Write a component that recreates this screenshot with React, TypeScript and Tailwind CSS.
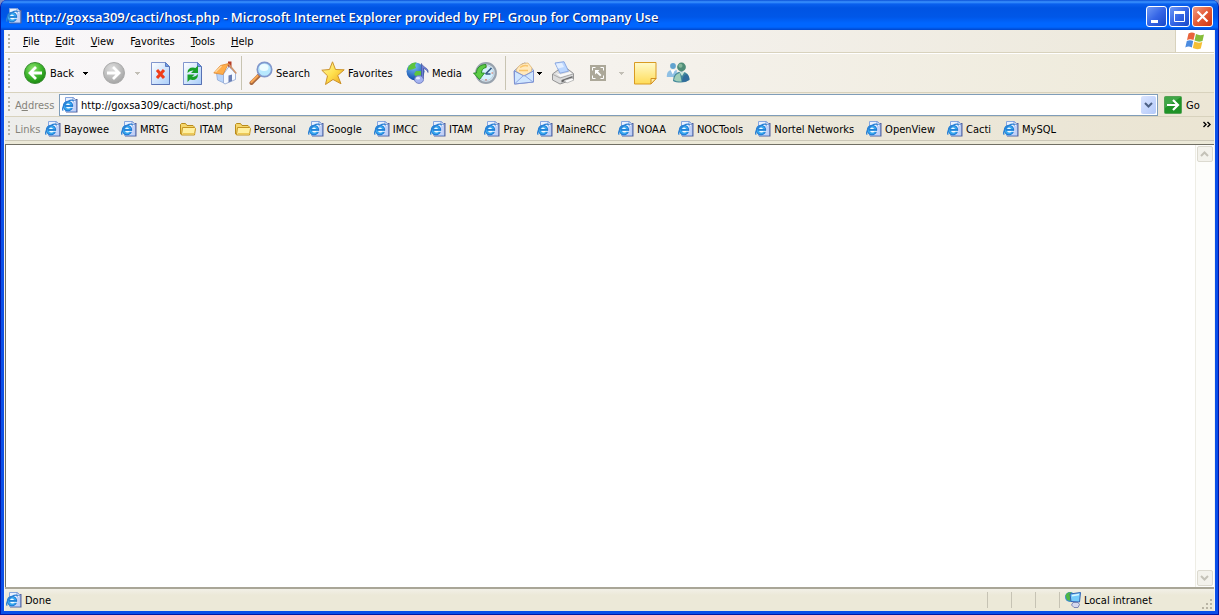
import React from "react";

type Box = { className?: string };

function PageIcon({ className = "h-4 w-4" }: Box) {
  return (
    <svg viewBox="0 0 16 16" className={className} aria-hidden="true">
      <path d="M4 2h11.500v13.500H4z" fill="#56639c" />
      <path d="M3.500.5h8L14 3v11.500H3.500z" fill="#eaf1ff" stroke="#86a6df" />
      <path d="M11 5h2.500v9H9z" fill="#c3d1f8" />
      <path d="M11 .5V3.500h3z" fill="#fff" stroke="#6f90d0" strokeWidth=".8" />
      <circle cx="6" cy="9" r="5.200" fill="#1f7ad2" />
      <circle cx="6" cy="9" r="4.300" fill="#38a8f0" />
      <path d="M4 7.900Q4.400 6.400 6 6.400t2 1.500z" fill="#f2faff" />
      <path d="M4 9.800h7.400v.9H8.200Q7.400 11.700 6 11.600 4.300 11.500 4 9.800z" fill="#f2faff" />
      <path d="M3 8.900h8" stroke="#1f7ad2" strokeWidth="1.500" />
      <path d="M1.200 13.600C-.6 11.500 2.500 5.500 8 3.400c2.200-.7 3.600-.4 3 1.200" fill="none" stroke="#2a80d4" strokeWidth="1.300" />
    </svg>
  );
}

function FolderIcon() {
  return (
    <svg viewBox="0 0 16 16" className="h-4 w-4" aria-hidden="true">
      <path d="M.5 13V3.500l1-1h4l1.500 2h6l1 1V13z" fill="#f5d66b" stroke="#b98c1c" />
      <path d="M2.500 6.500h12.200l.8 1-1 6.500H1.500z" fill="#fff0a0" stroke="#c6951f" />
      <path d="M3 12.500h11.500" stroke="#edc956" />
    </svg>
  );
}

function Arrow({ muted = false }: { muted?: boolean }) {
  return (
    <svg viewBox="0 0 5 3" className={muted ? "h-[3px] w-[5px] fill-[#c2bfb6]" : "h-[3px] w-[5px] fill-black"} shapeRendering="crispEdges" aria-hidden="true">
      <path d="M0 0h5L2.500 3z" />
    </svg>
  );
}

function RoundArrow({ back = false }: { back?: boolean }) {
  const id = back ? "backFill" : "forwardFill";
  return (
    <svg viewBox="0 0 22 22" className="h-[22px] w-[22px] shrink-0" aria-hidden="true">
      <defs>
        <radialGradient id={id} cx=".4" cy=".3" r=".75">
          <stop offset="0" stopColor={back ? "#8ee36f" : "#dedede"} />
          <stop offset=".55" stopColor={back ? "#3db52c" : "#bebebe"} />
          <stop offset="1" stopColor={back ? "#16840d" : "#a2a2a2"} />
        </radialGradient>
      </defs>
      <circle cx="11" cy="11" r="10.500" fill={`url(#${id})`} stroke={back ? "#3a8c33" : "#aaa"} />
      <path d={back ? "M18 11H6m6-6-6 6 6 6" : "M4 11h12m-6-6 6 6-6 6"} fill="none" stroke="#fff" strokeWidth="2.800" />
    </svg>
  );
}

function Sheet({ children }: { children: React.ReactNode }) {
  return (
    <svg viewBox="0 0 20 23" className="h-[23px] w-5" aria-hidden="true">
      <defs>
        <linearGradient id="sheetFill" x2="1" y2="1">
          <stop stopColor="#fff" />
          <stop offset="1" stopColor="#a9cdf9" />
        </linearGradient>
      </defs>
      <path d="M.5.5h14l4 4v18H.5z" fill="url(#sheetFill)" stroke="#8196ce" />
      <path d="M.5 22.500h18V5" fill="none" stroke="#5771b4" />
      <path d="M14.500.5v4h4z" fill="#6f9ae8" stroke="#5c7dc0" />
      {children}
    </svg>
  );
}

function HomeIcon() {
  return (
    <svg viewBox="0 0 24 24" className="h-6 w-6" aria-hidden="true">
      <path d="M15 .5h3.500V8H15z" fill="#b63e26" />
      <path d="M3.500 12 10 10l2 12.500L4.500 19z" fill="#b9d4fa" stroke="#8fa8d6" strokeWidth=".8" />
      <path d="M10.500 13 16 5.500l6.500 7v6L12 23l-1.500-1z" fill="#f6f9ff" stroke="#8ea5d0" strokeWidth=".8" />
      <path d="M15.500 14.500l3.500-1v6.500l-3.500 1.500z" fill="#6a7fb5" />
      <path d="M.8 12 7.500 4.500 15.500 2.500 10 13.500z" fill="#ffae4c" stroke="#e08a34" strokeWidth=".8" />
      <path d="M15.500 3 23.300 12.500" stroke="#d09468" strokeWidth="1.600" />
      <path d="M2.500 11 8.500 5" stroke="#ffd9a3" strokeWidth="1.200" />
    </svg>
  );
}

function SearchIcon() {
  return (
    <svg viewBox="0 0 24 24" className="h-6 w-6 shrink-0" aria-hidden="true">
      <path d="M2.500 22 10 14.500" stroke="#a8683f" strokeWidth="4" strokeLinecap="round" />
      <path d="M2.500 21 8.500 15" stroke="#f8a654" strokeWidth="2.200" strokeLinecap="round" />
      <circle cx="15.500" cy="8.500" r="7.200" fill="#b7e8fe" stroke="#8197cc" strokeWidth="1.700" />
      <ellipse cx="15" cy="6.500" rx="4.500" ry="3.500" fill="#eefcff" />
    </svg>
  );
}

function StarIcon() {
  return (
    <svg viewBox="0 0 24 24" className="h-6 w-6 shrink-0" aria-hidden="true">
      <defs>
        <linearGradient id="starFill" x2="1" y2="1">
          <stop stopColor="#fffbb0" />
          <stop offset=".5" stopColor="#ffe04d" />
          <stop offset="1" stopColor="#eda019" />
        </linearGradient>
      </defs>
      <path d="M11.500.8l3 7.700 8.700.3-6.500 5.700 3.300 8.300-8-4.300-7.500 5 2-8.700L.8 9.200l7.700-.7z" fill="url(#starFill)" stroke="#cc922a" strokeLinejoin="round" />
    </svg>
  );
}

function MediaIcon() {
  return (
    <svg viewBox="0 0 24 24" className="h-6 w-6 shrink-0" aria-hidden="true">
      <defs>
        <radialGradient id="globeFill" cx=".4" cy=".2" r=".8">
          <stop stopColor="#7cc4fa" />
          <stop offset="1" stopColor="#0d47a8" />
        </radialGradient>
      </defs>
      <circle cx="9.500" cy="10.500" r="9" fill="url(#globeFill)" />
      <path d="M3 5c2-3 5-4 7.500-3.500L9 4l1 3-4 1.500L2 9c0-2 0-3 1-4zM10 10l5 0v6l-4 1-3-4z" fill="#5cc43f" />
      <path d="M15.500 18V2.500c1 4 7.500 4 6.500 9-1-2.500-2.500-3.500-4.500-4V18" fill="#6f7fd6" stroke="#4b589f" strokeWidth=".7" />
      <ellipse cx="13" cy="18.500" rx="4.500" ry="3.900" fill="#a6b4f1" stroke="#6170b9" strokeWidth=".8" />
      <ellipse cx="12" cy="17.300" rx="2" ry="1.200" fill="#e4e9ff" />
    </svg>
  );
}

function HistoryIcon() {
  return (
    <svg viewBox="0 0 24 24" className="h-6 w-6" aria-hidden="true">
      <circle cx="13" cy="12" r="9.800" fill="#dcebf5" stroke="#98a2ad" strokeWidth="2.200" />
      <circle cx="13" cy="12" r="7.600" fill="#d6f0fd" stroke="#b9cddb" />
      <path d="M12.500 13 18.500 7m-6 6h5" stroke="#365c85" strokeWidth="1.700" />
      <path d="M13 5v1.500m7 5.500h-1.500M13 19.500V18" stroke="#d9604a" strokeWidth="1.200" />
      <path d="M13 3.500C7 3.500 3.500 7 3.500 12H.5l6 6.500 5-6.500H8.500c0-3 1.500-5 4.500-5.500z" fill="#5ecb45" stroke="#238a22" strokeWidth=".9" />
    </svg>
  );
}

function MailIcon() {
  return (
    <svg viewBox="0 0 22 24" className="h-6 w-[22px] shrink-0" aria-hidden="true">
      <path d="M1 10 9 3q3-2 5 0l6.500 6v12L1.500 23z" fill="#b7d5fb" stroke="#8496d2" />
      <path d="M3 9q4-7.500 12-7l4 5-1 4-7 4-7-4z" fill="#ffe9bd" stroke="#e0b570" strokeWidth=".8" />
      <path d="M7 6.500q4-3 8-1.500M6 9.500h9" stroke="#f9c46a" strokeWidth="1.500" fill="none" />
      <path d="M1.500 10 11 15l9.500-5V21l-19 2z" fill="#cfe6ff" stroke="#7f93d2" />
      <path d="M2 22.500 11 14l9 7" stroke="#8fa6e2" fill="none" />
    </svg>
  );
}

function PrintIcon() {
  return (
    <svg viewBox="0 0 24 24" className="h-6 w-6" aria-hidden="true">
      <path d="M1.500 13 7 9l9-1.500 6.500 5v6L9 23l-7.500-4z" fill="#dcdcdc" stroke="#959595" />
      <path d="M4 2 13 .7l4.500 9.500-8.500 2z" fill="#bcd7ff" stroke="#8ba8e0" />
      <path d="M5 2.800 11 2l2 4-6 1.500z" fill="#e4efff" />
      <path d="m2 13.500 7 3.500 13-4" fill="none" stroke="#a9a9a9" />
      <path d="m4.500 12 5 1.500 9.500-2.500 2 1.500L9.500 16z" fill="#fafafa" />
      <path d="m10.500 19 11-4v2l-11 4.500z" fill="#666" />
      <path d="m13 19.500 8-2.500 2 2-7 3z" fill="#fbfbfb" stroke="#a8a8a8" strokeWidth=".7" />
    </svg>
  );
}

function ExpandIcon() {
  return (
    <svg viewBox="0 0 18 18" className="h-[18px] w-[18px] shrink-0" aria-hidden="true">
      <path d="M1 1h16v16H1z" fill="#aca899" />
      <path d="M3.500 6.500v-3h3m5 0h3v3m0 5v3h-3m-5 0h-3v-3" fill="none" stroke="#fff" />
      <path d="M6 10.500V6h4.500L9 7.500l3.500 3.500-1.300 1.300L7.500 9z" fill="#fff" />
    </svg>
  );
}

function NoteIcon() {
  return (
    <svg viewBox="0 0 23 23" className="h-[23px] w-[23px]" aria-hidden="true">
      <defs>
        <linearGradient id="noteFill" x2="0" y2="1">
          <stop stopColor="#fffacb" />
          <stop offset="1" stopColor="#ffdc58" />
        </linearGradient>
      </defs>
      <path d="M.5.5h21.500v16L17 22H.5z" fill="url(#noteFill)" stroke="#d99b22" />
      <path d="M22 16.500h-5V22z" fill="#fff0a3" stroke="#d28e20" />
    </svg>
  );
}

function PeopleIcon() {
  return (
    <svg viewBox="0 0 24 24" className="h-6 w-6" aria-hidden="true">
      <circle cx="7" cy="5" r="2.900" fill="#62a3cf" />
      <path d="M.8 16c0-5 2-7 5-7l2 1 3-1v7z" fill="#8fc0e4" />
      <path d="m4.500 9 2.300 4.500L9 9z" fill="#fff" />
      <circle cx="15.500" cy="6" r="4.400" fill="#4f8d78" />
      <circle cx="14.500" cy="4.800" r="2" fill="#84b79b" />
      <path d="M7 20q0-9 8.500-9.500 8 .5 8 8.500-4 2.500-8.500 2.500-5.500 0-8-1.500z" fill="#43889a" />
      <path d="M8 19q1-6.500 6-7l1.500 8.500q-4.500.5-7.500-1.500z" fill="#9fceb9" />
      <path d="m13.500 11 2.500 4 2.500-4z" fill="#c9e6da" />
      <path d="M16 21q0-6 4.500-8 3 2 3 5.500-3 2.500-7.500 2.500z" fill="#316c9c" />
    </svg>
  );
}

function WindowsFlag() {
  return (
    <svg viewBox="0 0 20 18" className="h-[18px] w-5" aria-label="Windows">
      <path d="M3.500 1.500Q7-.5 10 1.500L8.500 8Q5 6.500 2 8z" fill="#e8643c" />
      <path d="M11 2q3.500 2 8 .5L17.500 9q-4 1.500-8-.5z" fill="#86bd3b" />
      <path d="M1.800 9Q5 7.500 8.200 9L6.800 15.500Q3.500 13.500.3 15.500z" fill="#4a8be0" />
      <path d="M9.300 9.500q4 2 8 .5l-1.500 6.500q-4 1.500-8-.5z" fill="#f5bf35" />
    </svg>
  );
}

function NetworkIcon() {
  return (
    <svg viewBox="0 0 16 16" className="h-4 w-4" aria-hidden="true">
      <circle cx="5" cy="5" r="5" fill="#3b8ad2" />
      <path d="M.5 3.500q2-4 6-3L5 4l1 5-4-1z" fill="#4eb743" />
      <path d="M5 2 15.500.5 14.500 10l-8.500-.5z" fill="#75cbfa" stroke="#3363b4" />
      <path d="M7 3.800l7-1.300" stroke="#d9f5ff" strokeWidth="1.500" />
      <path d="M8 10.500h5l1.500 2-1.500 3H9L6.500 13z" fill="#d6d9ee" stroke="#6872aa" strokeWidth=".8" />
    </svg>
  );
}

function Grip() {
  return <span className="my-1 ml-[3px] w-[2px] shrink-0 self-stretch bg-[repeating-linear-gradient(to_bottom,#b5b2a6_0_2px,transparent_2px_4px)]" />;
}

function Separator() {
  return <span className="my-[2px] w-px shrink-0 self-stretch border-l border-[#c8c4b2]" />;
}

function Chevron({ up = false }: { up?: boolean }) {
  return (
    <svg viewBox="0 0 9 6" className="h-[6px] w-[9px]" aria-hidden="true">
      <path d={up ? "M1 5l3.500-3.500L8 5" : "M1 1l3.500 3.500L8 1"} fill="none" stroke="currentColor" strokeWidth="2" />
    </svg>
  );
}

const menus = [
  ["", "F", "ile"],
  ["", "E", "dit"],
  ["", "V", "iew"],
  ["F", "a", "vorites"],
  ["", "T", "ools"],
  ["", "H", "elp"],
];

const links = [
  { name: "Bayowee" },
  { name: "MRTG" },
  { name: "ITAM", folder: true },
  { name: "Personal", folder: true },
  { name: "Google" },
  { name: "IMCC" },
  { name: "ITAM" },
  { name: "Pray" },
  { name: "MaineRCC" },
  { name: "NOAA" },
  { name: "NOCTools" },
  { name: "Nortel Networks" },
  { name: "OpenView" },
  { name: "Cacti" },
  { name: "MySQL" },
];

const captionButton = "flex h-[21px] w-[21px] items-center justify-center rounded-[3px] border border-white bg-linear-to-br";
const scrollButton = "flex h-4 w-4 items-center justify-center rounded-[2px] border border-[#dcdad0] bg-[#f3f2ec] text-[#c4c2b8]";

export default function App() {
  return (
    <div className="bg-[#7f8fc5]">
      <div className="flex min-h-screen flex-col overflow-hidden rounded-t-[7px] border-x border-b border-[#0019a8] bg-[#0a4fe8] font-['DejaVu_Sans_Condensed','DejaVu_Sans',sans-serif] text-[11px] leading-4 text-black">
        <header className="flex h-[30px] shrink-0 items-center bg-[linear-gradient(to_bottom,#0a50d8_0,#3c94ff_2px,#0a60ee_4px,#0054e3_8px,#0057e8_17px,#0066ff_23px,#0066ff_27px,#0046cb_30px)] pr-[5px] pl-[5px] text-white">
          <span className="pt-px"><PageIcon /></span>
          <h1 className="ml-1 flex-1 truncate pt-1 font-['Open_Sans',sans-serif] text-[13px] font-semibold [text-shadow:1px_1px_0_#0b2a7d]">
            http://goxsa309/cacti/host.php - Microsoft Internet Explorer provided by FPL Group for Company Use
          </h1>
          <div className="flex gap-[2px] pt-[3px]">
            <button aria-label="Minimize" className={`${captionButton} from-[#6f98f5] via-[#3565e6] to-[#1747c9]`}>
              <svg viewBox="0 0 19 19" className="h-[19px] w-[19px]"><path d="M4 13h7v3H4z" fill="#fff" /></svg>
            </button>
            <button aria-label="Maximize" className={`${captionButton} from-[#6f98f5] via-[#3565e6] to-[#1747c9]`}>
              <svg viewBox="0 0 19 19" className="h-[19px] w-[19px]"><path d="M4.500 5v9.500h10V5" fill="none" stroke="#fff" /><path d="M4 4h11v3H4z" fill="#fff" /></svg>
            </button>
            <button aria-label="Close" className={`${captionButton} from-[#f29a80] via-[#e35a35] to-[#cf3511]`}>
              <svg viewBox="0 0 19 19" className="h-[19px] w-[19px]"><path d="m4.500 4.500 10 10m0-10-10 10" stroke="#fff" strokeWidth="2.200" /></svg>
            </button>
          </div>
        </header>

        <div className="mx-[3px] mb-[3px] flex flex-1 flex-col border-x border-[#f4f3ee] bg-[#ece9d8]">
          <nav className="flex h-[23px] shrink-0 items-stretch border-b border-[#d8d2bd] bg-linear-to-r from-[#f9f7f9] via-[#f5f2ee] to-[#ece8da]">
            <Grip />
            <div className="ml-[5px] flex flex-1 items-center pt-px">
              {menus.map(([before, key, after]) => (
                <button key={before + key + after} className="px-2">
                  {before}<span className="underline underline-offset-1">{key}</span>{after}
                </button>
              ))}
            </div>
            <div className="flex w-[39px] items-center justify-center border-l border-[#d8d2bd] bg-white"><WindowsFlag /></div>
          </nav>

          <div className="flex h-10 shrink-0 items-center border-y border-t-white border-b-[#d8d2bd] bg-linear-to-r from-[#f9f7f9] via-[#f5f2ed] to-[#eeead9]">
            <Grip />
            <button className="ml-[14px] flex w-[79px] items-center gap-1"><RoundArrow back /><span className="pt-px">Back</span><span className="ml-[5px]"><Arrow /></span></button>
            <button aria-label="Forward" disabled className="flex w-[42px] items-center gap-[10px]"><RoundArrow /><Arrow muted /></button>
            <button aria-label="Stop" className="flex w-8 justify-center">
              <Sheet><path d="m6 8 7 8m0-8-7 8" stroke="#f03c18" strokeWidth="3" /></Sheet>
            </button>
            <button aria-label="Refresh" className="flex w-8 justify-center">
              <Sheet>
                <path d="M4.500 11q0-5.500 5.500-5.500l2.500.5L15 3.500V11H8l2.500-2.500Q7 8 4.500 11zM15 12q0 6-5.500 6L7 17.500 4.500 20v-7.500h7L9 15q3.500.5 6-3z" fill="#19a02a" />
              </Sheet>
            </button>
            <button aria-label="Home" className="flex w-8 justify-center"><HomeIcon /></button>
            <span className="flex w-2 self-stretch"><Separator /></span>
            <button className="flex w-[72px] items-center gap-[3px]"><SearchIcon /><span className="pt-px">Search</span></button>
            <button className="flex w-[85px] items-center gap-[3px]"><StarIcon /><span className="pt-px">Favorites</span></button>
            <button className="flex w-[67px] items-center gap-[2px]"><MediaIcon /><span className="pt-px">Media</span></button>
            <button aria-label="History"><HistoryIcon /></button>
            <span className="flex w-4 justify-center self-stretch"><Separator /></span>
            <button aria-label="Mail" className="flex w-[38px] items-center gap-[2px]"><MailIcon /><Arrow /></button>
            <button aria-label="Print" className="w-[38px]"><PrintIcon /></button>
            <button aria-label="Full screen" disabled className="flex w-[45px] items-center gap-3"><ExpandIcon /><Arrow muted /></button>
            <button aria-label="Notes" className="w-8"><NoteIcon /></button>
            <button aria-label="Messenger"><PeopleIcon /></button>
          </div>

          <form className="flex h-6 shrink-0 items-center border-b border-[#d8d2bd] bg-linear-to-r from-[#f3f2f1] to-[#ece6d5]" onSubmit={(e) => e.preventDefault()}>
            <Grip />
            <label htmlFor="address" className="ml-[5px] w-[44px] pt-[2px] text-[#85837b]">A<span className="underline underline-offset-1">d</span>dress</label>
            <div className="flex h-[22px] flex-1 items-center border border-[#7f9db9] bg-white pr-px pl-[2px]">
              <PageIcon />
              <input id="address" defaultValue="http://goxsa309/cacti/host.php" className="ml-[3px] min-w-0 flex-1 bg-transparent pt-[2px] outline-none" />
              <button type="button" aria-label="Show address list" className="flex h-[18px] w-[15px] items-center justify-center rounded-[2px] bg-linear-to-br from-[#dbe5ff] to-[#b3c9f9] text-[#4d6185]"><Chevron /></button>
            </div>
            <button className="flex w-14 items-center gap-1 pl-[6px]">
              <svg viewBox="0 0 18 18" className="h-[18px] w-[18px]" aria-hidden="true">
                <rect x=".5" y=".5" width="17" height="17" rx="1" fill="#1f9327" stroke="#54a254" />
                <path d="M1 1h16L1 12z" fill="#62b967" opacity=".5" />
                <path d="M3 9h11M9 4l5 5-5 5" fill="none" stroke="#fff" strokeWidth="2.200" />
              </svg>
              <span className="pt-[2px]">Go</span>
            </button>
          </form>

          <div className="flex h-6 shrink-0 items-center border-b border-[#ccc8b8] bg-linear-to-r from-[#ededeb] to-[#ebe5d3]">
            <Grip />
            <span className="ml-[5px] w-[30px] pt-[2px] text-[#85837b]">Links</span>
            <div className="flex flex-1 items-center gap-3">
              {links.map(({ name, folder }, i) => (
                <a key={i} href="#" className="flex items-center gap-[3px] whitespace-nowrap">
                  {folder ? <FolderIcon /> : <PageIcon />}
                  <span className="pt-[2px]">{name}</span>
                </a>
              ))}
            </div>
            <button aria-label="More links" className="mr-[3px] self-start pt-1">
              <svg viewBox="0 0 8 7" className="h-[7px] w-2"><path d="m.5 1 2.500 2.500L.5 6m4-5L7 3.500 4.500 6" fill="none" stroke="#000" strokeWidth="1.400" /></svg>
            </button>
          </div>
          <div className="h-[3px] shrink-0 bg-[#ece9d8]" />

          <main className="flex flex-1 border-t border-l border-[#716f64] bg-white">
            <div className="flex-1" />
            <div className="mr-px flex w-[18px] flex-col items-center justify-between border-l border-[#eeede5] bg-[#fdfdfb] py-px">
              <button aria-label="Scroll up" className={scrollButton}><Chevron up /></button>
              <button aria-label="Scroll down" className={scrollButton}><Chevron /></button>
            </div>
          </main>

          <footer className="flex h-6 shrink-0 items-center border-t-2 border-[#a9a697] bg-[linear-gradient(to_bottom,#f2f0e7,#ece9d8_6px)]">
            <span className="ml-px flex flex-1 items-center gap-[3px]"><PageIcon /><span className="pt-[2px]">Done</span></span>
            <div className="flex h-4 items-center">
              <span className="h-4 w-6 border-l border-[#c6c3b4]" />
              <span className="h-4 w-6 border-l border-[#c6c3b4]" />
              <span className="h-4 w-6 border-l border-[#c6c3b4]" />
              <span className="flex h-4 w-[143px] items-center gap-[3px] border-l border-[#c6c3b4] pl-[5px]"><NetworkIcon /><span className="pt-[2px]">Local intranet</span></span>
            </div>
            <svg viewBox="0 0 12 12" className="h-3 w-3 self-end" aria-hidden="true">
              <path d="M8 0h2v2H8zM4 4h2v2H4zm4 0h2v2H8zM0 8h2v2H0zm4 0h2v2H4zm4 0h2v2H8z" fill="#b8b4a4" />
            </svg>
          </footer>
        </div>
      </div>
    </div>
  );
}
